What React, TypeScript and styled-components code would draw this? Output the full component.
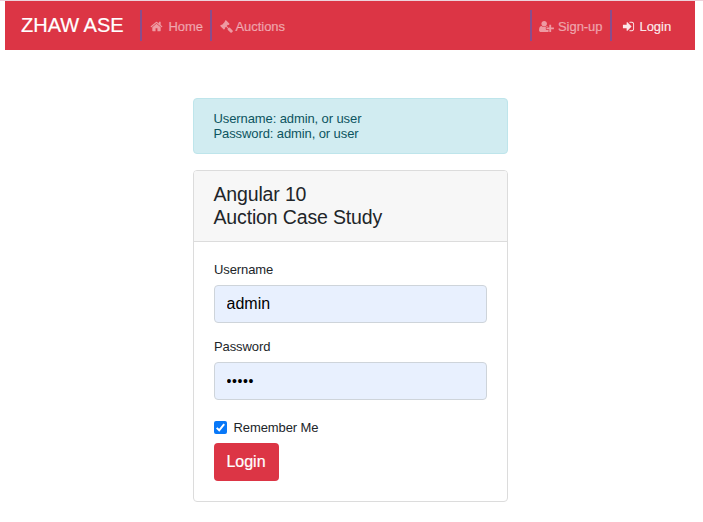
import React from "react";
import styled, { createGlobalStyle } from "styled-components";

const GlobalStyle = createGlobalStyle`
  *, *::before, *::after { box-sizing: border-box; }
  body {
    margin: 0;
    background: #fff;
    color: #212529;
    font-family: "Liberation Sans", Arial, sans-serif;
    font-size: 13px;
    line-height: 15px;
  }
`;

const Page = styled.div`
  height: 522px;
  padding: 0 8px 0 5px;
  border-top: 1px solid #ecd3dc;
  overflow: hidden;
`;

const Navbar = styled.nav`
  display: flex;
  align-items: center;
  height: 49px;
  padding: 0 16px;
  background: #dc3545;
`;

const Brand = styled.a`
  flex: none;
  width: 119px;
  padding-bottom: 1px;
  color: #fff;
  font-size: 20px;
  line-height: 30px;
  white-space: nowrap;
  -webkit-text-stroke: 0.2px #fff;
`;

const NavGroup = styled.div<{ $end?: boolean }>`
  display: flex;
  flex: none;
  margin-left: ${(p) => (p.$end ? "auto" : "0")};
`;

const NavLink = styled.a<{ $width: number; $gap: number; $inset?: number; $active?: boolean }>`
  display: flex;
  flex: none;
  align-items: center;
  gap: ${(p) => p.$gap}px;
  width: ${(p) => p.$width}px;
  height: 31px;
  padding: 2px 0 0 ${(p) => p.$inset ?? 8}px;
  border-left: 2px solid #8a4d8c;
  color: ${(p) => (p.$active ? "rgba(255,255,255,.88)" : "rgba(255,255,255,.5)")};
  letter-spacing: -0.05px;
  white-space: nowrap;
  -webkit-text-stroke: 0.2px currentColor;
`;

const Glyph = styled.svg`
  height: 13px;
  flex: none;
  fill: currentColor;
`;

const Column = styled.main`
  display: flex;
  flex-direction: column;
  gap: 16px;
  width: 315px;
  margin: 48px 0 0 188px;
`;

const Alert = styled.div`
  height: 56px;
  padding: 12px 19.5px 0;
  border: 1px solid #bee5eb;
  border-radius: 4px;
  background: #d1ecf1;
  color: #0c5460;
  letter-spacing: -0.1px;
`;

const Card = styled.section`
  height: 332px;
  border: 1px solid #dcdcdc;
  border-radius: 4px;
  overflow: hidden;
`;

const CardHeader = styled.header`
  height: 71px;
  padding: 12px 19.5px 0;
  border-bottom: 1px solid #dcdcdc;
  background: #f7f7f7;
`;

const Title = styled.h1`
  margin: 0;
  font-size: 19.5px;
  font-weight: 400;
  line-height: 23px;
  letter-spacing: -0.15px;
`;

const Form = styled.form`
  display: flex;
  flex-direction: column;
  align-items: flex-start;
  padding: 20px;
`;

const Field = styled.label`
  display: flex;
  flex-direction: column;
  gap: 8px;
  width: 100%;
  margin-bottom: 16px;
  letter-spacing: -0.1px;
`;

const Input = styled.input`
  height: 38px;
  padding: 0 11.5px;
  border: 1px solid #ced4da;
  border-radius: 4px;
  outline: none;
  background: #e8f0fe;
  color: #000;
  font: 16px "Liberation Sans", Arial, sans-serif;

  &[type="password"] {
    padding-bottom: 1px;
    font-size: 14px;
    letter-spacing: 0.6px;
  }
`;

const Remember = styled.label`
  display: flex;
  align-items: center;
  gap: 6.5px;
  height: 15px;
  margin-top: 4px;
  letter-spacing: -0.1px;
`;

const CheckBox = styled.span`
  display: flex;
  width: 13px;
  height: 13px;
  border-radius: 2px;
  background: #0878f8;
`;

const SubmitButton = styled.button`
  width: 65px;
  height: 38px;
  margin-top: 8px;
  padding: 0 1px 0 0;
  border: 0;
  border-radius: 4px;
  background: #dc3545;
  color: #fff;
  font: 16px "Liberation Sans", Arial, sans-serif;
  -webkit-text-stroke: 0.2px #fff;
`;

const icons = {
  home: {
    box: "0 0 1792 1792",
    d: "M1472 992v480q0 26-19 45t-45 19h-384v-384h-256v384h-384q-26 0-45-19t-19-45v-480q0-1 .5-3t.5-3l575-474 575 474q1 2 1 6zm223-69l-62 74q-8 9-21 11h-3q-13 0-21-7l-692-577-692 577q-12 8-24 7-13-2-21-11l-62-74q-8-10-7-23.5t11-21.5l719-599q32-26 76-26t76 26l244 204v-195q0-14 9-23t23-9h192q14 0 23 9t9 23v408l219 182q10 8 11 21.5t-7 23.5z",
  },
  gavel: {
    box: "0 0 1792 1792",
    d: "M1771 1536q0 53-37 90l-107 108q-39 37-91 37-53 0-90-37l-363-364q-38-36-38-90 0-53 43-96l-256-256-126 126q-14 14-34 14t-34-14q2 2 12.5 12t12.5 13 10 11.5 10 13.5 6 13.5 5.5 16.5 1.5 18q0 38-28 68-3 3-16.5 18t-19 20.5-18.5 16.5-22 15.5-22 9-26 4.5q-40 0-68-28l-408-408q-28-28-28-68 0-13 4.5-26t9-22 15.5-22 16.5-18.5 20.5-19 18-16.5q30-28 68-28 10 0 18 1.5t16.5 5.5 13.5 6 13.5 10 11.5 10 13 12.5 12 12.5q-14-14-14-34t14-34l348-348q14-14 34-14t34 14q-2-2-12.5-12t-12.5-13-10-11.5-10-13.5-6-13.5-5.5-16.5-1.5-18q0-38 28-68 3-3 16.5-18t19-20.5 18.5-16.5 22-15.5 22-9 26-4.5q40 0 68 28l408 408q28 28 28 68 0 13-4.5 26t-9 22-15.5 22-16.5 18.5-20.5 19-18 16.5q-30 28-68 28-10 0-18-1.5t-16.5-5.5-13.5-6-13.5-10-11.5-10-13-12.5-12-12.5q14 14 14 34t-14 34l-126 126 256 256q43-43 96-43 52 0 91 37l363 363q37 39 37 91z",
  },
  userPlus: {
    box: "0 0 2048 1792",
    d: "M704 896q-159 0-271.5-112.5t-112.5-271.5 112.5-271.5 271.5-112.5 271.5 112.5 112.5 271.5-112.5 271.5-271.5 112.5zm960 128h352q13 0 22.5 9.5t9.5 22.5v192q0 13-9.5 22.5t-22.5 9.5h-352v352q0 13-9.5 22.5t-22.5 9.5h-192q-13 0-22.5-9.5t-9.5-22.5v-352h-352q-13 0-22.5-9.5t-9.5-22.5v-192q0-13 9.5-22.5t22.5-9.5h352v-352q0-13 9.5-22.5t22.5-9.5h192q13 0 22.5 9.5t9.5 22.5v352zm-736 224q0 52 38 90t90 38h256v238q-68 50-171 50h-874q-121 0-194-69t-73-190q0-53 3.5-103.5t14-109 26.5-108.5 43-97.5 62-81 85.5-53.5 111.5-20q19 0 39 17 79 61 154.5 91.5t164.5 30.5 164.5-30.5 154.5-91.5q20-17 39-17 132 0 217 96h-223q-52 0-90 38t-38 90v192z",
  },
  signIn: {
    box: "0 0 1792 1792",
    d: "M1312 896q0 26-19 45l-544 544q-19 19-45 19t-45-19-19-45v-288h-448q-26 0-45-19t-19-45v-384q0-26 19-45t45-19h448v-288q0-26 19-45t45-19 45 19l544 544q19 19 19 45zm352-352v704q0 119-84.5 203.5t-203.5 84.5h-320q-13 0-22.5-9.5t-9.5-22.5q0-4-1-20t-.5-26.5 3-23.5 10-19.5 20.5-6.5h320q66 0 113-47t47-113v-704q0-66-47-113t-113-47h-312l-11.5-1-11.5-3-8-5.5-7-9-2-13.5q0-4-1-20t-.5-26.5 3-23.5 10-19.5 20.5-6.5h320q119 0 203.5 84.5t84.5 203.5z",
  },
};

const Icon = ({ name }: { name: keyof typeof icons }) => (
  <Glyph viewBox={icons[name].box} width={name === "userPlus" ? 15 : 13} aria-hidden>
    <path d={icons[name].d} />
  </Glyph>
);

export default function App() {
  return (
    <>
      <GlobalStyle />
      <Page>
        <Navbar>
          <Brand>ZHAW ASE</Brand>
          <NavGroup>
            <NavLink $width={70} $gap={5.5}><Icon name="home" />Home</NavLink>
            <NavLink $width={80} $gap={2.5}><Icon name="gavel" />Auctions</NavLink>
          </NavGroup>
          <NavGroup $end>
            <NavLink $width={80} $gap={4} $inset={7}><Icon name="userPlus" />Sign-up</NavLink>
            <NavLink $width={69} $gap={5} $inset={9.5} $active><Icon name="signIn" />Login</NavLink>
          </NavGroup>
        </Navbar>
        <Column>
          <Alert>
            Username: admin, or user<br />
            Password: admin, or user
          </Alert>
          <Card>
            <CardHeader>
              <Title>Angular 10<br />Auction Case Study</Title>
            </CardHeader>
            <Form>
              <Field>
                Username
                <Input defaultValue="admin" />
              </Field>
              <Field>
                Password
                <Input type="password" defaultValue="admin" />
              </Field>
              <Remember>
                <CheckBox>
                  <svg width="13" height="13" viewBox="0 0 13 13" fill="none" stroke="#fff" strokeWidth="2">
                    <path d="M2.7 6.9 5.2 9.3 10.2 3.2" />
                  </svg>
                </CheckBox>
                Remember Me
              </Remember>
              <SubmitButton type="button">Login</SubmitButton>
            </Form>
          </Card>
        </Column>
      </Page>
    </>
  );
}
